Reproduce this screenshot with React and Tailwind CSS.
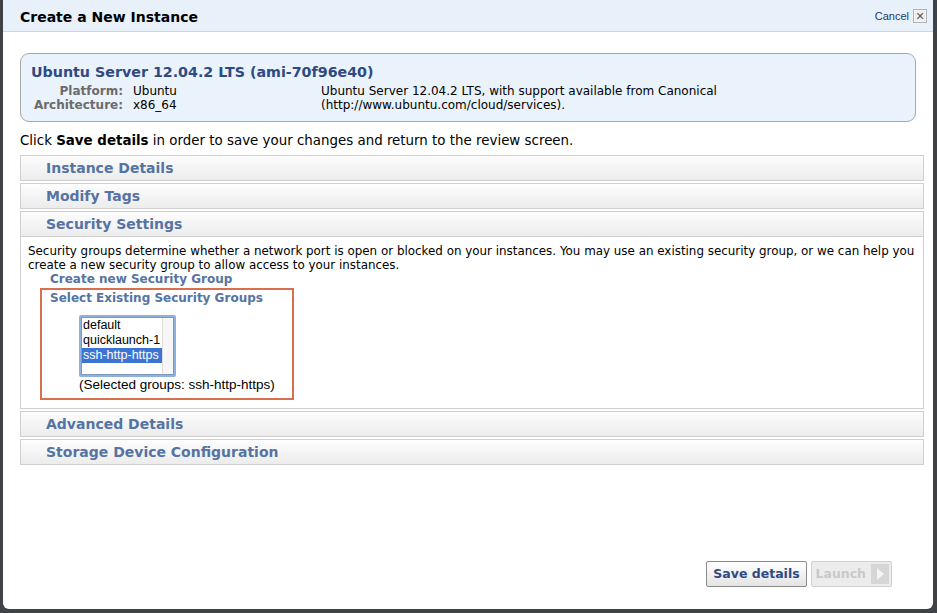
export default function App() {
  const v = { fontFamily: '"DejaVu Sans", Verdana, sans-serif' };
  const a = { fontFamily: '"Liberation Sans", Arial, sans-serif' };
  const Bar = ({ children }) => (
    <div className="h-[26px] border border-[#cfcfcf] bg-gradient-to-b from-[#fdfdfd] to-[#ececec] pl-[25px] text-[14px] font-bold leading-[24px] text-[#5573a3]">
      {children}
    </div>
  );
  return (
    <div className="h-[613px] w-[937px] overflow-hidden bg-[#3f4246] pl-[3px] pr-[4px] pb-[4px]" style={v}>
      <div className="flex h-[609px] flex-col rounded-b-[6px] bg-white">
        <div className="flex h-[32px] items-center justify-between border-b border-[#c5d7ec] bg-[#e8f0fa] pl-[17px] pr-[6px]">
          <div className="mt-[3px] text-[14px] font-bold text-black">Create a New Instance</div>
          <div className="mt-[1px] flex items-center gap-[4px]">
            <span className="text-[11px] text-[#1f3a6b]" style={a}>Cancel</span>
            <span className="flex h-[14px] w-[14px] items-center justify-center border border-[#b5b5b5] bg-[#f0f0f0] text-[11px] leading-none text-[#555]">✕</span>
          </div>
        </div>
        <div className="flex flex-1 flex-col px-[17px] pb-[22px] pt-[21px]">
          <div className="rounded-[9px] border border-[#a9a9a9] bg-[#eaf2fc] px-[10px] pb-[9px] pt-[9px]">
            <div className="text-[14.25px] font-bold leading-[18px] text-[#2e4a80]">Ubuntu Server 12.04.2 LTS (ami-70f96e40)</div>
            <div className="mt-[3px] flex text-[12px] leading-[14px] text-black">
              <div className="w-[92px] text-right font-bold text-[#6b6b6b]">
                <div>Platform:</div>
                <div>Architecture:</div>
              </div>
              <div className="ml-[10px] w-[188px]">
                <div>Ubuntu</div>
                <div>x86_64</div>
              </div>
              <div>
                <div>Ubuntu Server 12.04.2 LTS, with support available from Canonical</div>
                <div>(http://www.ubuntu.com/cloud/services).</div>
              </div>
            </div>
          </div>
          <div className="mt-[11px] text-[13.4px] leading-[16px] text-black">
            Click <b>Save details</b> in order to save your changes and return to the review screen.
          </div>
          <div className="mt-[6px] flex w-[904px] flex-col gap-[2px]">
            <Bar>Instance Details</Bar>
            <Bar>Modify Tags</Bar>
            <div>
              <Bar>Security Settings</Bar>
              <div className="h-[172px] border border-t-0 border-[#cfcfcf] pl-[7px] pr-[2px] pt-[7px] text-[11.9px] leading-[14px] text-black">
                <div>Security groups determine whether a network port is open or blocked on your instances. You may use an existing security group, or we can help you create a new security group to allow access to your instances.</div>
                <div className="ml-[22px] text-[12px] font-bold text-[#5573a3]">Create new Security Group</div>
                <div className="ml-[12px] mt-[2px] h-[112px] w-[254px] border-[2px] border-[#d8704f] pl-[8px] pt-[1px]">
                  <div className="text-[12px] font-bold leading-[14px] text-[#5573a3]">Select Existing Security Groups</div>
                  <div className="ml-[29px] mt-[10px] h-[62px] w-[97px] rounded-[2px] border-[2px] border-[#8fb2db]" style={a}>
                    <div className="flex h-full border border-[#7d97bd]">
                      <div className="flex-1 text-[12.5px] leading-[15px]">
                        <div className="pl-[1px]">default</div>
                        <div className="pl-[1px]">quicklaunch-1</div>
                        <div className="bg-[#3c74d4] pl-[1px] text-white">ssh-http-https</div>
                      </div>
                      <div className="w-[11px] border-l border-[#dcdcdc] bg-[#f7f7f7]"></div>
                    </div>
                  </div>
                  <div className="ml-[29px] text-[13.5px] leading-[15px]" style={a}>(Selected groups: ssh-http-https)</div>
                </div>
              </div>
            </div>
            <Bar>Advanced Details</Bar>
            <Bar>Storage Device Configuration</Bar>
          </div>
          <div className="mt-auto flex justify-end gap-[4px] pr-[24px]">
            <div className="flex h-[26px] w-[101px] items-center justify-center rounded-[2px] border border-[#8a8a8a] bg-gradient-to-b from-[#ffffff] to-[#e4e4e4] text-[12.5px] font-bold text-[#2e4a80]">Save details</div>
            <div className="flex h-[26px] w-[81px] items-center justify-end gap-[5px] rounded-[2px] border border-[#d0d0d0] bg-[#ececec] pr-[2px] text-[12.5px] font-bold text-[#c9c9c9]">
              <span>Launch</span>
              <span className="flex h-[20px] w-[18px] items-center justify-center bg-[#d6d6d6]">
                <svg width="8" height="12" viewBox="0 0 8 12"><path d="M1 0 L8 6 L1 12 Z" fill="#f4f4f4" /></svg>
              </span>
            </div>
          </div>
        </div>
      </div>
    </div>
  );
}
